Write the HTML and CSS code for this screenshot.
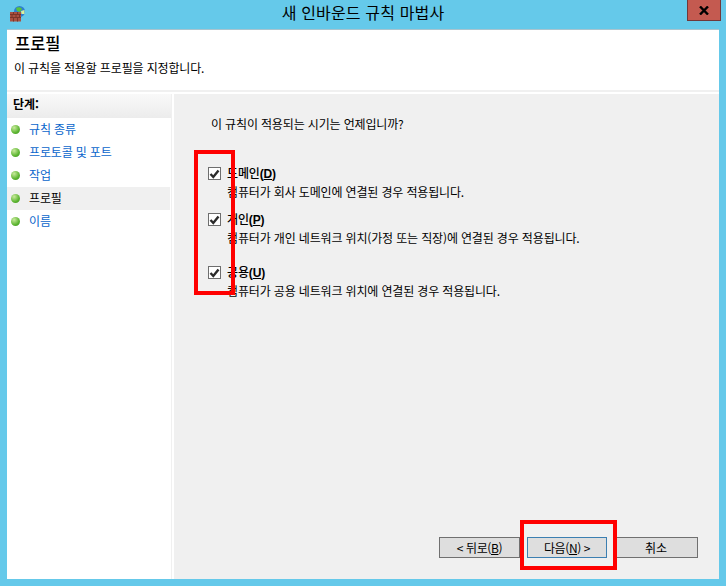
FILE: index.html
```html
<!DOCTYPE html>
<html lang="ko">
<head>
<meta charset="utf-8">
<title>새 인바운드 규칙 마법사</title>
<link rel="stylesheet" href="styles.css">
</head>
<body>
<div class="window">
  <div class="titlebar">
    <svg class="app-icon" width="16" height="16" viewBox="0 0 16 16">
      <circle cx="9.500" cy="5.500" r="5.500" fill="#2f7fd0"/>
      <path d="M6 2 C8 0.500 11 1 12 3 L10 6 L7 5 Z" fill="#57c23f"/>
      <path d="M11 5 L14.500 4 L14.500 8 L11.500 8 Z" fill="#d8f0a0"/>
      <rect x="0" y="6" width="11" height="9.500" fill="#a9503f"/>
      <path d="M0 8.500 H11 M0 11.500 H11 M3.500 6 V8.500 M7.500 6 V8.500 M2 8.500 V11.500 M6 8.500 V11.500 M9.500 8.500 V11.500 M3.500 11.500 V15.500 M7.500 11.500 V15.500" stroke="#7a3528" stroke-width="1" fill="none"/>
    </svg>
    <div class="title">새 인바운드 규칙 마법사</div>
    <div class="close"><svg width="10" height="9" viewBox="0 0 10 9"><path d="M1 0.500 L9 8.500 M9 0.500 L1 8.500" stroke="#000" stroke-width="2.400" fill="none"/></svg></div>
  </div>
  <div class="client">
    <header class="head">
      <h1 class="head-title">프로필</h1>
      <p class="head-sub">이 규칙을 적용할 프로필을 지정합니다.</p>
    </header>
    <div class="body">
      <nav class="steps">
        <div class="steps-head">단계:</div>
        <ul class="step-list">
          <li class="step"><span class="dot"></span><span class="step-text">규칙 종류</span></li>
          <li class="step"><span class="dot"></span><span class="step-text">프로토콜 및 포트</span></li>
          <li class="step"><span class="dot"></span><span class="step-text">작업</span></li>
          <li class="step current"><span class="dot"></span><span class="step-text">프로필</span></li>
          <li class="step"><span class="dot"></span><span class="step-text">이름</span></li>
        </ul>
      </nav>
      <main class="panel">
        <p class="question">이 규칙이 적용되는 시기는 언제입니까?</p>
        <div class="options">
          <div class="option opt-domain">
            <span class="check"><svg width="11" height="10" viewBox="0 0 11 10"><path d="M1.500 5 L4.300 8 L9.500 1.500" stroke="#2b2b2b" stroke-width="2.400" fill="none"/></svg></span>
            <div class="opt-text">
              <div class="opt-label">도메인<span class="latin">(<u>D</u>)</span></div>
              <div class="opt-desc">컴퓨터가 회사 도메인에 연결된 경우 적용됩니다.</div>
            </div>
          </div>
          <div class="option opt-private">
            <span class="check"><svg width="11" height="10" viewBox="0 0 11 10"><path d="M1.500 5 L4.300 8 L9.500 1.500" stroke="#2b2b2b" stroke-width="2.400" fill="none"/></svg></span>
            <div class="opt-text">
              <div class="opt-label">개인<span class="latin">(<u>P</u>)</span></div>
              <div class="opt-desc">컴퓨터가 개인 네트워크 위치(가정 또는 직장)에 연결된 경우 적용됩니다.</div>
            </div>
          </div>
          <div class="option">
            <span class="check"><svg width="11" height="10" viewBox="0 0 11 10"><path d="M1.500 5 L4.300 8 L9.500 1.500" stroke="#2b2b2b" stroke-width="2.400" fill="none"/></svg></span>
            <div class="opt-text">
              <div class="opt-label">공용<span class="latin">(<u>U</u>)</span></div>
              <div class="opt-desc">컴퓨터가 공용 네트워크 위치에 연결된 경우 적용됩니다.</div>
            </div>
          </div>
        </div>
        <div class="buttons">
          <button class="btn back">&lt; 뒤로(<u>B</u>)</button>
          <button class="btn primary">다음(<u>N</u>) &gt;</button>
          <button class="btn cancel">취소</button>
        </div>
      </main>
    </div>
  </div>
  <div class="mark mark-checks"></div>
  <div class="mark mark-next"></div>
</div>
</body>
</html>
```
FILE: styles.css
```css
* { box-sizing: border-box; }
html, body { margin: 0; padding: 0; }
body { width: 726px; height: 586px; overflow: hidden; font-family: "Noto Sans CJK KR", "Liberation Sans", sans-serif; font-size: 12px; letter-spacing: -0.15px; color: #000; }
.window { position: relative; width: 726px; height: 586px; background: #65c9ea; display: flex; flex-direction: column; padding: 0 7px 7px; }
.titlebar { height: 29px; flex: none; display: flex; align-items: flex-start; position: relative; }
.app-icon { position: absolute; left: 3px; top: 6px; }
.title { flex: 1; text-align: center; font-size: 16px; line-height: 25px; letter-spacing: 0.15px; }
.close { position: absolute; right: -2px; top: 0; width: 34px; height: 21px; background: #c45a50; border: 1px solid #70383a; border-top: 0; display: flex; align-items: center; justify-content: center; }
.client { flex: 1; display: flex; flex-direction: column; background: #fff; border-top: 1px solid #a9c4cf; min-height: 0; }
.head { height: 62px; flex: none; border-bottom: 2px solid #f0f0f0; padding: 0 7px; }
.head-title { margin: 0 0 0 1px; font-size: 16.5px; font-weight: 500; line-height: 20px; letter-spacing: 0; padding-top: 3px; height: 27px; }
.head-sub { margin: 0; line-height: 16px; padding-top: 3px; }
.body { flex: 1; display: flex; min-height: 0; padding-top: 2px; }
.steps { width: 165px; flex: none; background: #fff; border-right: 1px solid #f0f0f0; }
.steps-head { height: 24px; padding: 1px 0 0 6px; font-weight: 700; line-height: 17px; letter-spacing: 0; background: linear-gradient(#f9f9f9, #ececec); }
.step-list { list-style: none; margin: 0; padding: 0; }
.step { height: 23px; display: flex; align-items: center; padding-left: 4px; margin-right: 1px; color: #0a66cc; line-height: 21px; }
.step-text { margin-bottom: 2px; }
.step.current { color: #000; background: #f0f0f0; }
.dot { width: 9px; height: 9px; border-radius: 50%; margin-right: 9px; background: radial-gradient(circle at 35% 30%, #c9ea9c, #5cb531 60%, #3f8f22); flex: none; }
.panel { flex: 1; margin-left: 2px; background: #f0f0f0; display: flex; flex-direction: column; padding: 22px 21px 21px 20px; min-width: 0; }
.question { margin: 0 0 0 17px; line-height: 16px; }
.options { margin: 30px 0 0 14px; display: flex; flex-direction: column; }
.option { display: flex; height: 54px; }
.opt-domain { height: 46px; }
.opt-private { height: 53px; }
.check { width: 13px; height: 13px; margin-top: 5px; background: #fff; border: 1px solid #6e6e6e; display: flex; align-items: center; justify-content: center; flex: none; }
.opt-text { margin-left: 6px; padding-top: 3px; }
.opt-label { font-weight: 500; line-height: 16px; }
.latin { font-family: "Liberation Sans", sans-serif; font-weight: 700; font-size: 12px; }
.opt-desc { line-height: 16px; margin-top: 2px; white-space: nowrap; }
.buttons { margin-top: auto; display: flex; justify-content: flex-end; gap: 7px; }
.btn { width: 80px; height: 21px; padding: 0; background: #dedede; border: 1px solid #707070; font: inherit; letter-spacing: -0.4px; line-height: 17px; color: #000; }
.btn.back { width: 81px; }
.btn.cancel { width: 84px; letter-spacing: 0; }
.btn.primary { border-color: #3c7fb1; }
.mark { position: absolute; border: 4px solid #f00; pointer-events: none; }
.mark-checks { left: 194px; top: 150px; width: 41px; height: 145px; }
.mark-next { left: 520px; top: 520px; width: 97px; height: 50px; }
```
